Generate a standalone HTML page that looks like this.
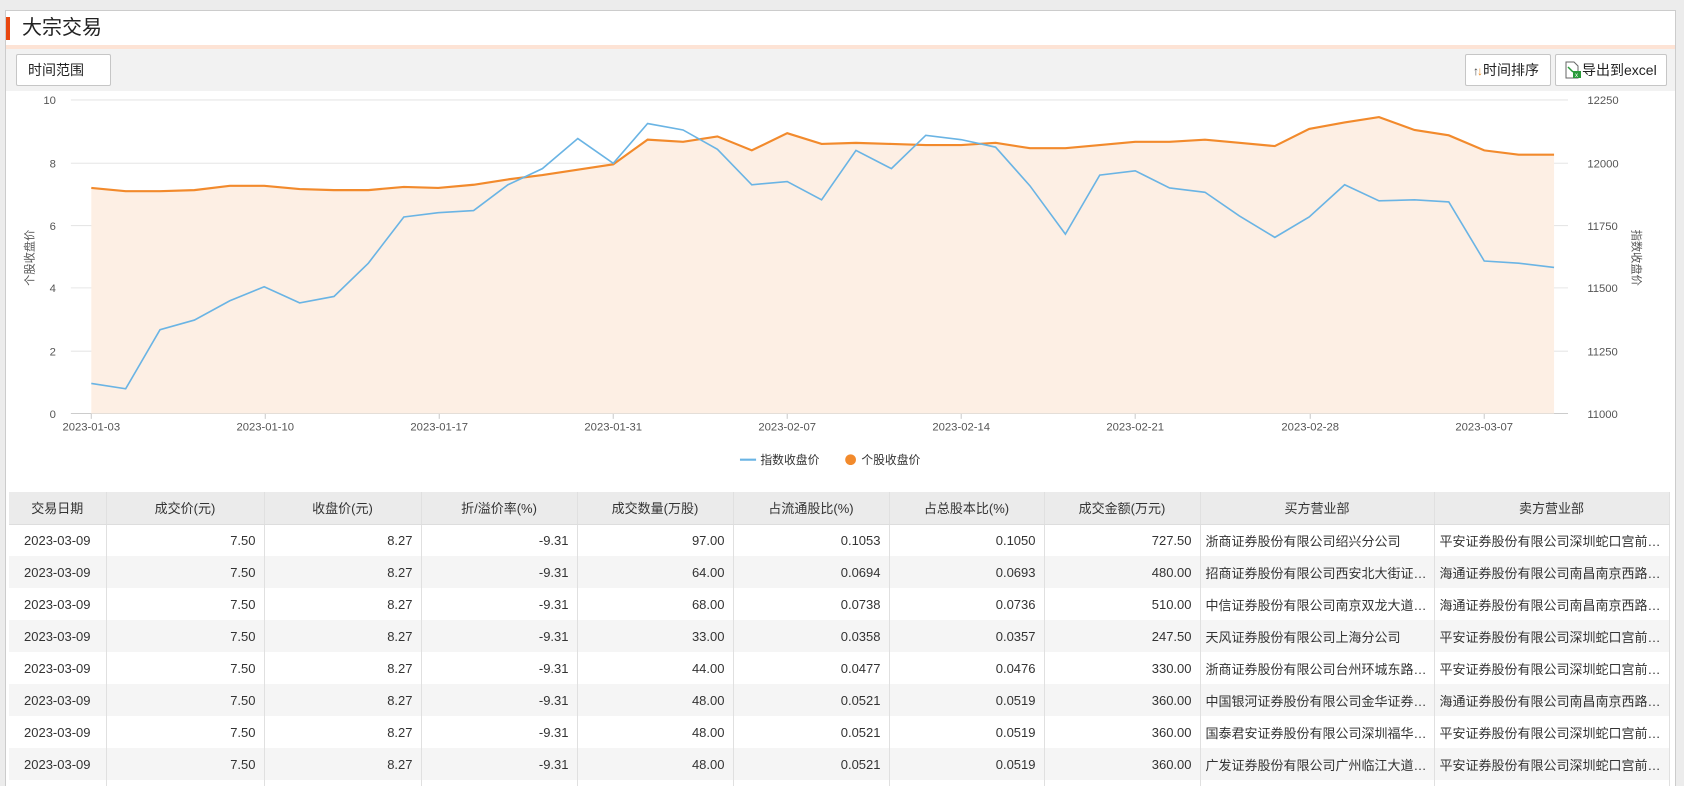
<!DOCTYPE html>
<html style="width:1684px;height:786px;overflow:hidden"><head><meta charset="utf-8"><style>
*{margin:0;padding:0;box-sizing:border-box}
body{width:1684px;height:786px;overflow:hidden;background:#ececec;font-family:"Liberation Sans","Noto Sans CJK SC",sans-serif;position:relative}
#panel{position:absolute;left:5px;top:10px;width:1671px;height:776px;background:#fff;border:1px solid #ccc;border-bottom:none}
.title{position:absolute;left:0;top:6px;height:23px;border-left:4px solid #e8460e;padding-left:12px;font-size:20px;line-height:23px;color:#222}
.oline{position:absolute;left:0;right:0;top:34px;height:4px;background:#fde3d5}
.tool{position:absolute;left:0;right:0;top:38px;height:42px;background:#f2f2f2}
.btn{position:absolute;top:5px;height:32px;border:1px solid #c6c6c6;background:#fff;font-size:14px;line-height:30px;color:#222;border-radius:2px}
svg.chart{position:absolute;left:0;top:0}
table{position:absolute;left:9px;top:492px;width:1660px;border-collapse:collapse;table-layout:fixed;font-size:13px;color:#333}
td,th{height:32px;border-right:1px solid #e0e0e0;white-space:nowrap;overflow:hidden;text-overflow:ellipsis;padding:0 8px}
th{background:#ebebeb;font-weight:normal;text-align:center;border-bottom:1px solid #ddd;color:#333}
td{text-align:right}
td:first-child{text-align:center}
td.l{text-align:left;padding:0 5px}
tr:nth-child(odd) td{background:#f5f5f5}
</style></head><body>
<div id="panel">
<div class="title">大宗交易</div>
<div class="oline"></div>
<div class="tool">
<div class="btn" style="left:10px;width:95px;padding-left:11px">时间范围</div>
<div class="btn" style="left:1459px;width:86px;padding-left:7px"><span style="font-size:12px;color:#444">↑</span><span style="font-size:12px;color:#f08a1e;margin-left:-2px">↓</span>时间排序</div>
<div class="btn" style="left:1549px;width:112px;padding-left:8px"><svg width="18" height="18" viewBox="0 0 18 18" style="vertical-align:-4px"><path d="M2 1h8l4 4v12H2z" fill="#fff" stroke="#666"/><path d="M4 6l5 5" stroke="#2a9a3a" stroke-width="1.5"/><rect x="9" y="10" width="8" height="7" fill="#2a9a3a"/><text x="11" y="16" font-size="6" fill="#fff">x</text></svg>导出到excel</div>
</div>
</div>
<svg class="chart" width="1684" height="490" viewBox="0 0 1568 456.2" font-family="Liberation Sans,Noto Sans CJK SC,sans-serif">
<g stroke="#e6e6e6" stroke-width="1">
<line x1="66" y1="93" x2="1460" y2="93"/><line x1="66" y1="152" x2="1460" y2="152"/><line x1="66" y1="210" x2="1460" y2="210"/><line x1="66" y1="268" x2="1460" y2="268"/><line x1="66" y1="327" x2="1460" y2="327"/>
</g>
<line x1="66" y1="385" x2="1460" y2="385" stroke="#ccc"/>
<g font-size="10.5" fill="#555" text-anchor="end">
<text x="52" y="97">10</text><text x="52" y="156">8</text><text x="52" y="214">6</text><text x="52" y="272">4</text><text x="52" y="331">2</text><text x="52" y="389">0</text>
</g>
<g font-size="10.5" fill="#555">
<text x="1478" y="97">12250</text><text x="1478" y="156">12000</text><text x="1478" y="214">11750</text><text x="1478" y="272">11500</text><text x="1478" y="331">11250</text><text x="1478" y="389">11000</text>
</g>
<g font-size="10.5" fill="#555" text-anchor="middle">
<text x="85" y="401">2023-01-03</text><text x="247" y="401">2023-01-10</text><text x="409" y="401">2023-01-17</text><text x="571" y="401">2023-01-31</text><text x="733" y="401">2023-02-07</text><text x="895" y="401">2023-02-14</text><text x="1057" y="401">2023-02-21</text><text x="1220" y="401">2023-02-28</text><text x="1382" y="401">2023-03-07</text>
</g>
<g stroke="#ccc"><line x1="85" y1="385" x2="85" y2="390"/><line x1="247" y1="385" x2="247" y2="390"/><line x1="409" y1="385" x2="409" y2="390"/><line x1="571" y1="385" x2="571" y2="390"/><line x1="733" y1="385" x2="733" y2="390"/><line x1="895" y1="385" x2="895" y2="390"/><line x1="1057" y1="385" x2="1057" y2="390"/><line x1="1220" y1="385" x2="1220" y2="390"/><line x1="1382" y1="385" x2="1382" y2="390"/></g>
<text font-size="10.5" fill="#555" transform="translate(31,240) rotate(-90)" text-anchor="middle">个股收盘价</text>
<text font-size="10.5" fill="#555" transform="translate(1520,240) rotate(90)" text-anchor="middle">指数收盘价</text>
<polygon fill="#fdefe4" points="85,385 85,175 117,178 149,178 181,177 214,173 246,173 279,176 311,177 343,177 376,174 408,175 441,172 473,167 505,163 538,158 571,153 603,130 636,132 668,127 700,140 733,124 765,134 797,133 830,134 862,135 895,135 927,133 959,138 992,138 1024,135 1057,132 1089,132 1122,130 1154,133 1187,136 1219,120 1252,114 1284,109 1317,121 1349,126 1382,140 1414,144 1447,144 1447,385"/>
<polyline fill="none" stroke="#f28a2c" stroke-width="2" points="85,175 117,178 149,178 181,177 214,173 246,173 279,176 311,177 343,177 376,174 408,175 441,172 473,167 505,163 538,158 571,153 603,130 636,132 668,127 700,140 733,124 765,134 797,133 830,134 862,135 895,135 927,133 959,138 992,138 1024,135 1057,132 1089,132 1122,130 1154,133 1187,136 1219,120 1252,114 1284,109 1317,121 1349,126 1382,140 1414,144 1447,144"/>
<polyline fill="none" stroke="#6ab4e4" stroke-width="1.5" points="85,357 117,362 149,307 181,298 214,280 246,267 279,282 311,276 343,245 376,202 408,198 441,196 473,172 505,157 538,129 571,152 603,115 636,121 668,139 700,172 733,169 765,186 797,140 830,157 862,126 895,130 927,137 959,173 992,218 1024,163 1057,159 1089,175 1122,179 1154,201 1187,221 1219,202 1252,172 1284,187 1317,186 1349,188 1382,243 1414,245 1447,249"/>
<line x1="689" y1="428" x2="704" y2="428" stroke="#6ab4e4" stroke-width="2"/>
<text x="708" y="432" font-size="11" fill="#333">指数收盘价</text>
<circle cx="792" cy="428" r="5" fill="#f28a2c"/>
<text x="802" y="432" font-size="11" fill="#333">个股收盘价</text>
</svg>
<table>
<colgroup><col style="width:97px"><col style="width:158px"><col style="width:157px"><col style="width:156px"><col style="width:156px"><col style="width:156px"><col style="width:155px"><col style="width:156px"><col style="width:234px"><col style="width:235px"></colgroup>
<tr><th>交易日期</th><th>成交价(元)</th><th>收盘价(元)</th><th>折/溢价率(%)</th><th>成交数量(万股)</th><th>占流通股比(%)</th><th>占总股本比(%)</th><th>成交金额(万元)</th><th>买方营业部</th><th>卖方营业部</th></tr>
<tr><td>2023-03-09</td><td>7.50</td><td>8.27</td><td>-9.31</td><td>97.00</td><td>0.1053</td><td>0.1050</td><td>727.50</td><td class="l">浙商证券股份有限公司绍兴分公司</td><td class="l">平安证券股份有限公司深圳蛇口宫前路证券营业部</td></tr>
<tr><td>2023-03-09</td><td>7.50</td><td>8.27</td><td>-9.31</td><td>64.00</td><td>0.0694</td><td>0.0693</td><td>480.00</td><td class="l">招商证券股份有限公司西安北大街证券营业部</td><td class="l">海通证券股份有限公司南昌南京西路证券营业部</td></tr>
<tr><td>2023-03-09</td><td>7.50</td><td>8.27</td><td>-9.31</td><td>68.00</td><td>0.0738</td><td>0.0736</td><td>510.00</td><td class="l">中信证券股份有限公司南京双龙大道证券营业部</td><td class="l">海通证券股份有限公司南昌南京西路证券营业部</td></tr>
<tr><td>2023-03-09</td><td>7.50</td><td>8.27</td><td>-9.31</td><td>33.00</td><td>0.0358</td><td>0.0357</td><td>247.50</td><td class="l">天风证券股份有限公司上海分公司</td><td class="l">平安证券股份有限公司深圳蛇口宫前路证券营业部</td></tr>
<tr><td>2023-03-09</td><td>7.50</td><td>8.27</td><td>-9.31</td><td>44.00</td><td>0.0477</td><td>0.0476</td><td>330.00</td><td class="l">浙商证券股份有限公司台州环城东路证券营业部</td><td class="l">平安证券股份有限公司深圳蛇口宫前路证券营业部</td></tr>
<tr><td>2023-03-09</td><td>7.50</td><td>8.27</td><td>-9.31</td><td>48.00</td><td>0.0521</td><td>0.0519</td><td>360.00</td><td class="l">中国银河证券股份有限公司金华证券营业部</td><td class="l">海通证券股份有限公司南昌南京西路证券营业部</td></tr>
<tr><td>2023-03-09</td><td>7.50</td><td>8.27</td><td>-9.31</td><td>48.00</td><td>0.0521</td><td>0.0519</td><td>360.00</td><td class="l">国泰君安证券股份有限公司深圳福华路证券营业部</td><td class="l">平安证券股份有限公司深圳蛇口宫前路证券营业部</td></tr>
<tr><td>2023-03-09</td><td>7.50</td><td>8.27</td><td>-9.31</td><td>48.00</td><td>0.0521</td><td>0.0519</td><td>360.00</td><td class="l">广发证券股份有限公司广州临江大道证券营业部</td><td class="l">平安证券股份有限公司深圳蛇口宫前路证券营业部</td></tr>
<tr><td></td><td></td><td></td><td></td><td></td><td></td><td></td><td></td><td class="l"></td><td class="l"></td></tr>
</table>
</body></html>
